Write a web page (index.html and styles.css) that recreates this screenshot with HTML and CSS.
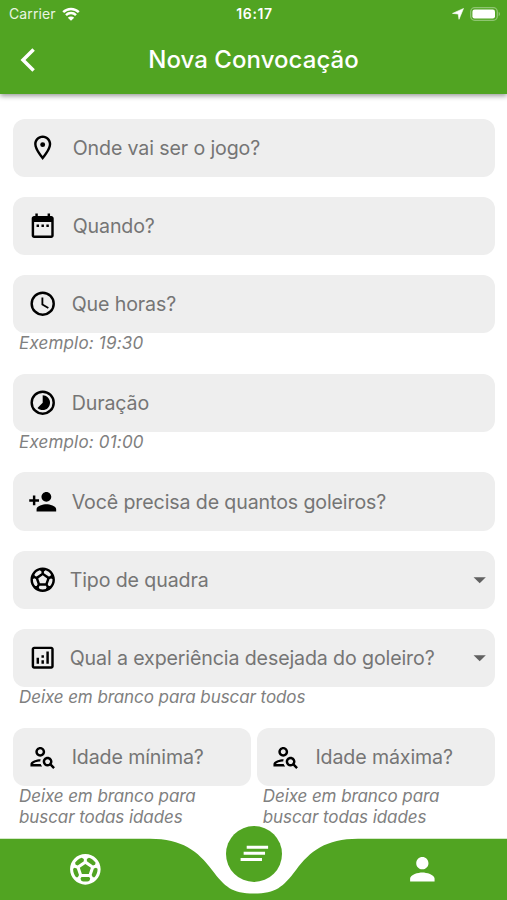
FILE: index.html
```html
<!DOCTYPE html>
<html lang="pt-BR">
<head>
  <meta charset="utf-8">
  <title>Nova Convocação</title>
  <link rel="stylesheet" href="styles.css">
</head>
<body>
  <!-- Icons used more than once -->
  <svg class="defs">
    <symbol id="soccer" viewBox="0 0 24 24"><path d="M12 2C6.48 2 2 6.48 2 12s4.48 10 10 10 10-4.48 10-10S17.52 2 12 2zm1 3.3l1.35-.95c1.82.56 3.37 1.76 4.38 3.34l-.39 1.34-1.35.46L13 6.7V5.3zm-3.35-.95L11 5.3v1.4L7.01 9.49l-1.35-.46-.39-1.34c1.01-1.57 2.56-2.77 4.38-3.34zM7.08 17.11l-1.14.1C4.73 15.81 4 13.99 4 12c0-.12.01-.23.02-.35l1-.73 1.38.48 1.46 4.34-.78 1.37zm7.42 2.48c-.79.26-1.63.41-2.5.41s-1.71-.15-2.5-.41l-.69-1.49.64-1.1h5.11l.64 1.11-.7 1.48zM14.27 15H9.73l-1.35-4.02L12 8.44l3.63 2.54L14.27 15zm3.79 2.21l-1.14-.1-.79-1.37 1.46-4.34 1.39-.47 1 .73c.01.11.02.22.02.34 0 1.99-.73 3.81-1.94 5.21z"/></symbol>
    <symbol id="person-search" viewBox="0 0 24 24"><path d="M10 12c2.21 0 4-1.79 4-4s-1.79-4-4-4-4 1.79-4 4 1.79 4 4 4zm0-6c1.1 0 2 .9 2 2s-.9 2-2 2-2-.9-2-2 .9-2 2-2z"/><path d="M4 18c.22-.72 3.31-2 6-2 0-.7.13-1.37.35-1.99C7.62 13.91 2 15.27 2 18v2h9.54c-.52-.58-.93-1.25-1.19-2H4z"/><path d="M19.43 18.02C19.79 17.43 20 16.74 20 16c0-2.21-1.79-4-4-4s-4 1.79-4 4 1.79 4 4 4c.74 0 1.43-.22 2.02-.57L20.59 22 22 20.59l-2.57-2.57zM16 18c-1.1 0-2-.9-2-2s.9-2 2-2 2 .9 2 2-.9 2-2 2z"/></symbol>
    <symbol id="arrow" viewBox="0 0 24 24"><path d="M7 10l5 5 5-5z"/></symbol>
  </svg>

  <div class="screen">
    <header class="header">
      <div class="status">
        <div class="carrier">
          <span>Carrier</span>
          <svg class="wifi" viewBox="0 0 18 14"><path d="M1.2 5.1a11.2 11.2 0 0 1 15.6 0M4 8.1a7.2 7.2 0 0 1 10 0" fill="none" stroke="#fff" stroke-width="2.5"/><path d="M9 13.8L5.8 10.7a4.6 4.6 0 0 1 6.4 0z" fill="#fff"/></svg>
        </div>
        <span class="time">16:17</span>
        <div class="indicators">
          <svg class="arrow-loc" viewBox="0 0 12 12"><path d="M11.5.5L7 11.3 6.200 6 .5 5.400z" fill="#fff" stroke="#fff" stroke-width=".6"/></svg>
          <svg class="battery" viewBox="0 0 31 14"><rect x=".7" y=".7" width="26.6" height="12.6" rx="4" fill="none" stroke="#8fc572" stroke-width="1.3"/><rect x="2.4" y="2.5" width="22.6" height="9" rx="2.2" fill="#fff"/><path d="M28.7 4.8c1.8.8 1.8 3.6 0 4.4z" fill="#8fc572"/></svg>
        </div>
      </div>
      <div class="toolbar">
        <svg class="back" viewBox="0 0 16 24"><path d="M13.600 1.500L3 12l10.600 10.500" fill="none" stroke="#fff" stroke-width="3.5"/></svg>
        <h1>Nova Convocação</h1>
      </div>
    </header>

    <main class="form">
      <div class="group">
        <div class="field">
          <svg class="icon" viewBox="0 0 24 24"><path d="M12 2C8.130 2 5 5.130 5 9c0 5.250 7 13 7 13s7-7.750 7-13c0-3.870-3.130-7-7-7zM7 9c0-2.760 2.240-5 5-5s5 2.240 5 5c0 2.880-2.880 7.190-5 9.880C9.920 16.210 7 11.850 7 9z"/><circle cx="12" cy="9.500" r="2"/></svg>
          <span class="label place">Onde vai ser o jogo?</span>
        </div>
      </div>

      <div class="group">
        <div class="field">
          <svg class="icon" viewBox="0 0 24 24"><path d="M9 11H7v2h2v-2zm4 0h-2v2h2v-2zm4 0h-2v2h2v-2zm2-7h-1V2h-2v2H8V2H6v2H5c-1.110 0-1.990.9-1.990 2L3 20c0 1.100.89 2 2 2h14c1.100 0 2-.9 2-2V6c0-1.100-.9-2-2-2zm0 16H5V9h14v11z"/></svg>
          <span class="label place">Quando?</span>
        </div>
      </div>

      <div class="group">
        <div class="field">
          <svg class="icon" viewBox="0 0 24 24"><circle cx="12" cy="12" r="9" fill="none" stroke="#000" stroke-width="2"/><path d="M12.500 7H11v6l5.250 3.150.75-1.230-4.500-2.670z"/></svg>
          <span class="label">Que horas?</span>
        </div>
        <p class="hint example">Exemplo: 19:30</p>
      </div>

      <div class="group">
        <div class="field">
          <svg class="icon" viewBox="0 0 24 24"><circle cx="12" cy="12" r="9" fill="none" stroke="#000" stroke-width="2"/><path d="M16.240 7.760C15.070 6.590 13.540 6 12 6v6l-4.240 4.240c2.340 2.340 6.140 2.340 8.490 0 2.340-2.340 2.340-6.140-.01-8.480z"/></svg>
          <span class="label">Duração</span>
        </div>
        <p class="hint example">Exemplo: 01:00</p>
      </div>

      <div class="group">
        <div class="field">
          <svg class="icon" viewBox="0 0 24 24"><path d="M15 12c2.210 0 4-1.790 4-4s-1.790-4-4-4-4 1.790-4 4 1.790 4 4 4zm-9-2V7H4v3H1v2h3v3h2v-3h3v-2H6zm9 4c-2.670 0-8 1.340-8 4v2h16v-2c0-2.660-5.330-4-8-4z"/></svg>
          <span class="label">Você precisa de quantos goleiros?</span>
        </div>
      </div>

      <div class="group">
        <div class="field">
          <svg class="icon"><use href="#soccer"/></svg>
          <span class="label option">Tipo de quadra</span>
          <svg class="icon drop"><use href="#arrow"/></svg>
        </div>
      </div>

      <div class="group">
        <div class="field">
          <svg class="icon" viewBox="0 0 24 24"><path d="M19 3H5c-1.100 0-2 .9-2 2v14c0 1.100.9 2 2 2h14c1.100 0 2-.9 2-2V5c0-1.100-.9-2-2-2zm0 16H5V5h14v14z"/><path d="M7 12h2v5H7zM15 7h2v10h-2zM11 14h2v3h-2zM11 10h2v2h-2z"/></svg>
          <span class="label option">Qual a experiência desejada do goleiro?</span>
          <svg class="icon drop"><use href="#arrow"/></svg>
        </div>
        <p class="hint">Deixe em branco para buscar todos</p>
      </div>

      <div class="ages">
        <div class="age">
          <div class="field">
            <svg class="icon"><use href="#person-search"/></svg>
            <span class="label">Idade mínima?</span>
          </div>
          <p class="hint">Deixe em branco para<br>buscar todas idades</p>
        </div>
        <div class="age">
          <div class="field">
            <svg class="icon"><use href="#person-search"/></svg>
            <span class="label">Idade máxima?</span>
          </div>
          <p class="hint">Deixe em branco para<br>buscar todas idades</p>
        </div>
      </div>
    </main>

    <nav class="nav">
      <svg class="nav-bg" viewBox="0 0 507 62"><path d="M0 .7H150C182 .7 198 13 212 32C225 49 232 55.500 254 55.500S283 49 296 32C310 13 326 .7 358 .7H507V62H0z"/></svg>
      <svg class="nav-icon ball"><use href="#soccer"/></svg>
      <div class="fab">
        <svg class="nav-icon" viewBox="0 0 24 24"><path d="M5 13h14v-2H5v2zm-2 4h14v-2H3v2zM7 7v2h14V7H7z"/></svg>
      </div>
      <svg class="nav-icon user" viewBox="0 0 24 24"><path d="M12 12c2.210 0 4-1.790 4-4s-1.790-4-4-4-4 1.790-4 4 1.790 4 4 4zm0 2c-2.670 0-8 1.340-8 4v2h16v-2c0-2.660-5.330-4-8-4z"/></svg>
    </nav>
  </div>
</body>
</html>
```

FILE: styles.css
```css
* { box-sizing: border-box; }
body { margin: 0; background: #fff; font-family: Inter, "Liberation Sans", sans-serif; }
svg { display: block; flex: none; }
.defs { display: none; }
.screen { display: flex; flex-direction: column; height: 900px; overflow: hidden; }

/* Header */
.header { flex: none; height: 94px; background: #51a422; color: #fff; box-shadow: 0 2px 5px rgba(0, 0, 0, 0.4); }
.status {
  display: grid; grid-template-columns: 1fr auto 1fr; align-items: center;
  height: 27px; padding: 0 6px 0 8px; font-size: 14px;
}
.carrier { display: flex; align-items: center; gap: 6px; padding-left: 1px; letter-spacing: 0.1px; color: #e9f5e2; }
.wifi { width: 18px; height: 14px; }
.time { font-weight: 600; letter-spacing: 0.6px; }
.indicators { display: flex; justify-content: flex-end; align-items: center; gap: 6px; }
.arrow-loc { width: 12px; height: 12px; }
.battery { width: 31px; height: 14px; }
.toolbar { display: grid; grid-template-columns: 40px 1fr 40px; align-items: center; height: 65px; }
.back { width: 16px; height: 24px; margin-left: 20px; }
h1 { margin: 0; font-size: 24px; font-weight: 500; text-align: center; white-space: nowrap; letter-spacing: 0.05px; }

/* Form */
.form { flex: 1; min-height: 0; padding: 24.5px 12.5px 0 13px; }
.group { margin-bottom: 19.7px; }
.field {
  display: flex; align-items: center; height: 58.5px; padding: 0 0 0 14.5px;
  background: #eee; border-radius: 12px;
}
.icon { width: 29.4px; height: 29.4px; }
.label { flex: 1; margin-left: 14.8px; font-size: 19.6px; color: #757575; white-space: nowrap; letter-spacing: -0.12px; }
.label.place { margin-left: 15.8px; }
.label.option { margin-left: 12.8px; }
.drop { fill: #616161; }
.hint { margin: 0 0 0 6px; font-size: 17px; line-height: 20.6px; font-style: italic; color: #808080; white-space: nowrap; letter-spacing: -0.08px; }
.hint.example { letter-spacing: 0.18px; }
.ages { display: grid; grid-template-columns: 1fr 1fr; gap: 6px; }

/* Bottom bar */
.nav { position: relative; flex: none; display: flex; align-items: center; height: 62px; }
.nav-bg { position: absolute; top: 0; left: 0; width: 507px; height: 62px; fill: #51a422; }
.nav-icon { width: 36.7px; height: 36.7px; fill: #fff; }
.ball, .user { position: relative; top: 0.5px; }
.ball { margin-left: 66.7px; }
.user { margin-left: auto; margin-right: 66.2px; }
.fab {
  position: absolute; left: 226px; top: -12.5px;
  display: flex; align-items: center; justify-content: center;
  width: 56px; height: 56px; border-radius: 50%; background: #51a422;
}
```
